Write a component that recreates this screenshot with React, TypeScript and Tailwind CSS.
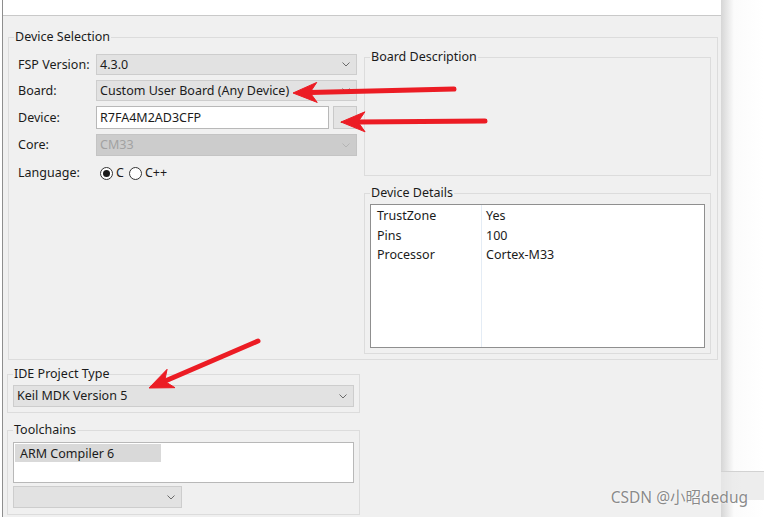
import React from "react";

const font = { fontFamily: '"Noto Sans", "Noto Sans CJK SC", sans-serif' };

function Chevron({ light = false }: { light?: boolean }) {
  return (
    <svg viewBox="0 0 8 5" className="h-[5px] w-[8px]" fill="none" stroke={light ? "#b4b4b4" : "#6a6a6a"} strokeWidth="1">
      <path d="M0.5 0.5l3.5 3.5 3.5-3.5" />
    </svg>
  );
}

function Combo({ text, w, h, disabled = false }: { text: string; w: string; h: string; disabled?: boolean }) {
  return (
    <div
      className={`flex items-center justify-between border pl-[3px] pr-[6px] ${w} ${h} ${
        disabled ? "border-[#c4c4c4] bg-[#cccccc] text-[#a2a2a2]" : "border-[#cdcdcd] bg-[#e2e2e2] text-[#1b1b1b]"
      }`}
    >
      <span>{text}</span>
      <Chevron light={disabled} />
    </div>
  );
}

function Radio({ on, label }: { on: boolean; label: string }) {
  return (
    <div className="flex items-center gap-[3px]">
      <span className="flex h-[13px] w-[13px] items-center justify-center rounded-full border border-[#333] bg-white">
        {on && <span className="h-[7px] w-[7px] rounded-full bg-[#1b1b1b]" />}
      </span>
      <span>{label}</span>
    </div>
  );
}

function Arrow({ x1, y1, x2, y2 }: { x1: number; y1: number; x2: number; y2: number }) {
  // tail (x1,y1) -> tip (x2,y2)
  const dx = x2 - x1;
  const dy = y2 - y1;
  const len = Math.hypot(dx, dy);
  const ux = dx / len;
  const uy = dy / len;
  const px = -uy;
  const py = ux;
  const L = 24;
  const W = 10;
  const bx = x2 - ux * L;
  const by = y2 - uy * L;
  const nx = x2 - ux * (L - 7);
  const ny = y2 - uy * (L - 7);
  const pts = [
    [x2, y2],
    [bx + px * W, by + py * W],
    [nx, ny],
    [bx - px * W, by - py * W],
  ]
    .map((p) => p.join(","))
    .join(" ");
  return (
    <g fill="#ec1c24" stroke="#ec1c24">
      <line x1={x1} y1={y1} x2={nx} y2={ny} strokeWidth="5" strokeLinecap="round" />
      <polygon points={pts} strokeWidth="1" strokeLinejoin="round" />
    </g>
  );
}

export default function App() {
  return (
    <div style={font} className="relative flex h-[517px] w-[764px] overflow-hidden bg-white text-[12.5px] leading-[18px] text-[#1b1b1b]">
      {/* dialog */}
      <div className="ml-[2px] flex h-full w-[719px] flex-col border-l border-[#8e8e8e] bg-[#f0f0f0]">
        <div className="h-[16px] shrink-0 border-b border-[#c9c9c9] bg-white" />

        <fieldset className="ml-[5px] mt-[12px] w-[710px] border border-[#dcdcdc] pb-[5px]">
          <legend className="ml-[5px] px-[1px] leading-[18px]">Device Selection</legend>
          <div className="flex">
            {/* form */}
            <div className="mt-[8px] flex w-[355px] flex-col gap-[5px] pl-[9px]">
              <div className="flex items-center">
                <span className="w-[78px]">FSP Version:</span>
                <Combo text="4.3.0" w="w-[261px]" h="h-[21px]" />
              </div>
              <div className="flex items-center">
                <span className="w-[78px]">Board:</span>
                <Combo text="Custom User Board (Any Device)" w="w-[261px]" h="h-[21px]" />
              </div>
              <div className="flex items-center">
                <span className="w-[78px]">Device:</span>
                <div className="flex h-[23px] w-[233px] items-center border border-[#b8b8b8] bg-white pl-[3px]">R7FA4M2AD3CFP</div>
                <div className="ml-[4px] flex h-[23px] w-[24px] items-end justify-start border border-[#c9c9c9] bg-[#e4e4e4] pb-[4px] pl-[6px] text-[11px] leading-[10px]">
                  ..
                </div>
              </div>
              <div className="flex items-center">
                <span className="w-[78px]">Core:</span>
                <Combo text="CM33" w="w-[261px]" h="h-[22px]" disabled />
              </div>
              <div className="mt-[1px] flex h-[22px] items-center">
                <span className="w-[82px]">Language:</span>
                <div className="flex items-center gap-[5px]">
                  <Radio on label="C" />
                  <Radio on={false} label="C++" />
                </div>
              </div>
            </div>

            {/* right column */}
            <div className="flex w-[347px] flex-col">
              <fieldset className="mt-[2px] h-[128px] border border-[#dcdcdc]">
                <legend className="ml-[5px] px-[1px] leading-[18px]">Board Description</legend>
              </fieldset>
              <fieldset className="mt-[8px] border border-[#dcdcdc] pb-[5px]">
                <legend className="ml-[5px] px-[1px] leading-[18px]">Device Details</legend>
                <div className="ml-[5px] mt-[2px] flex h-[144px] w-[335px] border border-[#8f8f8f] bg-white">
                  <div className="flex w-[111px] flex-col border-r border-[#e4ecf5] pl-[6px] pt-[1px] leading-[19.5px]">
                    <span>TrustZone</span>
                    <span>Pins</span>
                    <span>Processor</span>
                  </div>
                  <div className="flex flex-col pl-[4px] pt-[1px] leading-[19.5px]">
                    <span>Yes</span>
                    <span>100</span>
                    <span>Cortex-M33</span>
                  </div>
                </div>
              </fieldset>
            </div>
          </div>
        </fieldset>

        <fieldset className="ml-[4px] mt-[5px] w-[353px] border border-[#dcdcdc] pb-[5px]">
          <legend className="ml-[5px] px-[1px] leading-[18px]">IDE Project Type</legend>
          <div className="ml-[5px] mt-[2px]">
            <Combo text="Keil MDK Version 5" w="w-[341px]" h="h-[22px]" />
          </div>
        </fieldset>

        <fieldset className="ml-[4px] mt-[8px] w-[353px] border border-[#dcdcdc] pb-[6px]">
          <legend className="ml-[5px] px-[1px] leading-[18px]">Toolchains</legend>
          <div className="ml-[5px] mt-[3px] h-[41px] w-[341px] border border-[#b8b8b8] bg-white p-[1px]">
            <div className="h-[18px] w-[146px] bg-[#d9d9d9] pl-[5px] pt-[1px]">ARM Compiler 6</div>
          </div>
          <div className="ml-[5px] mt-[3px]">
            <Combo text="" w="w-[169px]" h="h-[22px]" />
          </div>
        </fieldset>
      </div>

      {/* window behind */}
      <div className="flex flex-1 flex-col bg-gradient-to-r from-[#d6d6d6] via-[#fbfbfb] via-30% to-white">
        <div className="mt-[471px] h-[29px] border-t border-[#d2d2d2] bg-[#e9e9e9]/80" />
      </div>

      {/* annotations */}
      <svg className="pointer-events-none absolute inset-0" width="764" height="517">
        <Arrow x1={454} y1={89} x2={293} y2={93} />
        <Arrow x1={485} y1={121} x2={341} y2={122} />
        <Arrow x1={258} y1={341} x2={149} y2={388} />
      </svg>

      <div
        className="absolute right-[16px] top-[487px] whitespace-nowrap text-[15.5px] leading-[20px] text-[#8a8a8a]"
        style={{ textShadow: "0 0 2px #fff, 0 0 1px #fff" }}
      >
        CSDN @小昭dedug
      </div>
    </div>
  );
}
